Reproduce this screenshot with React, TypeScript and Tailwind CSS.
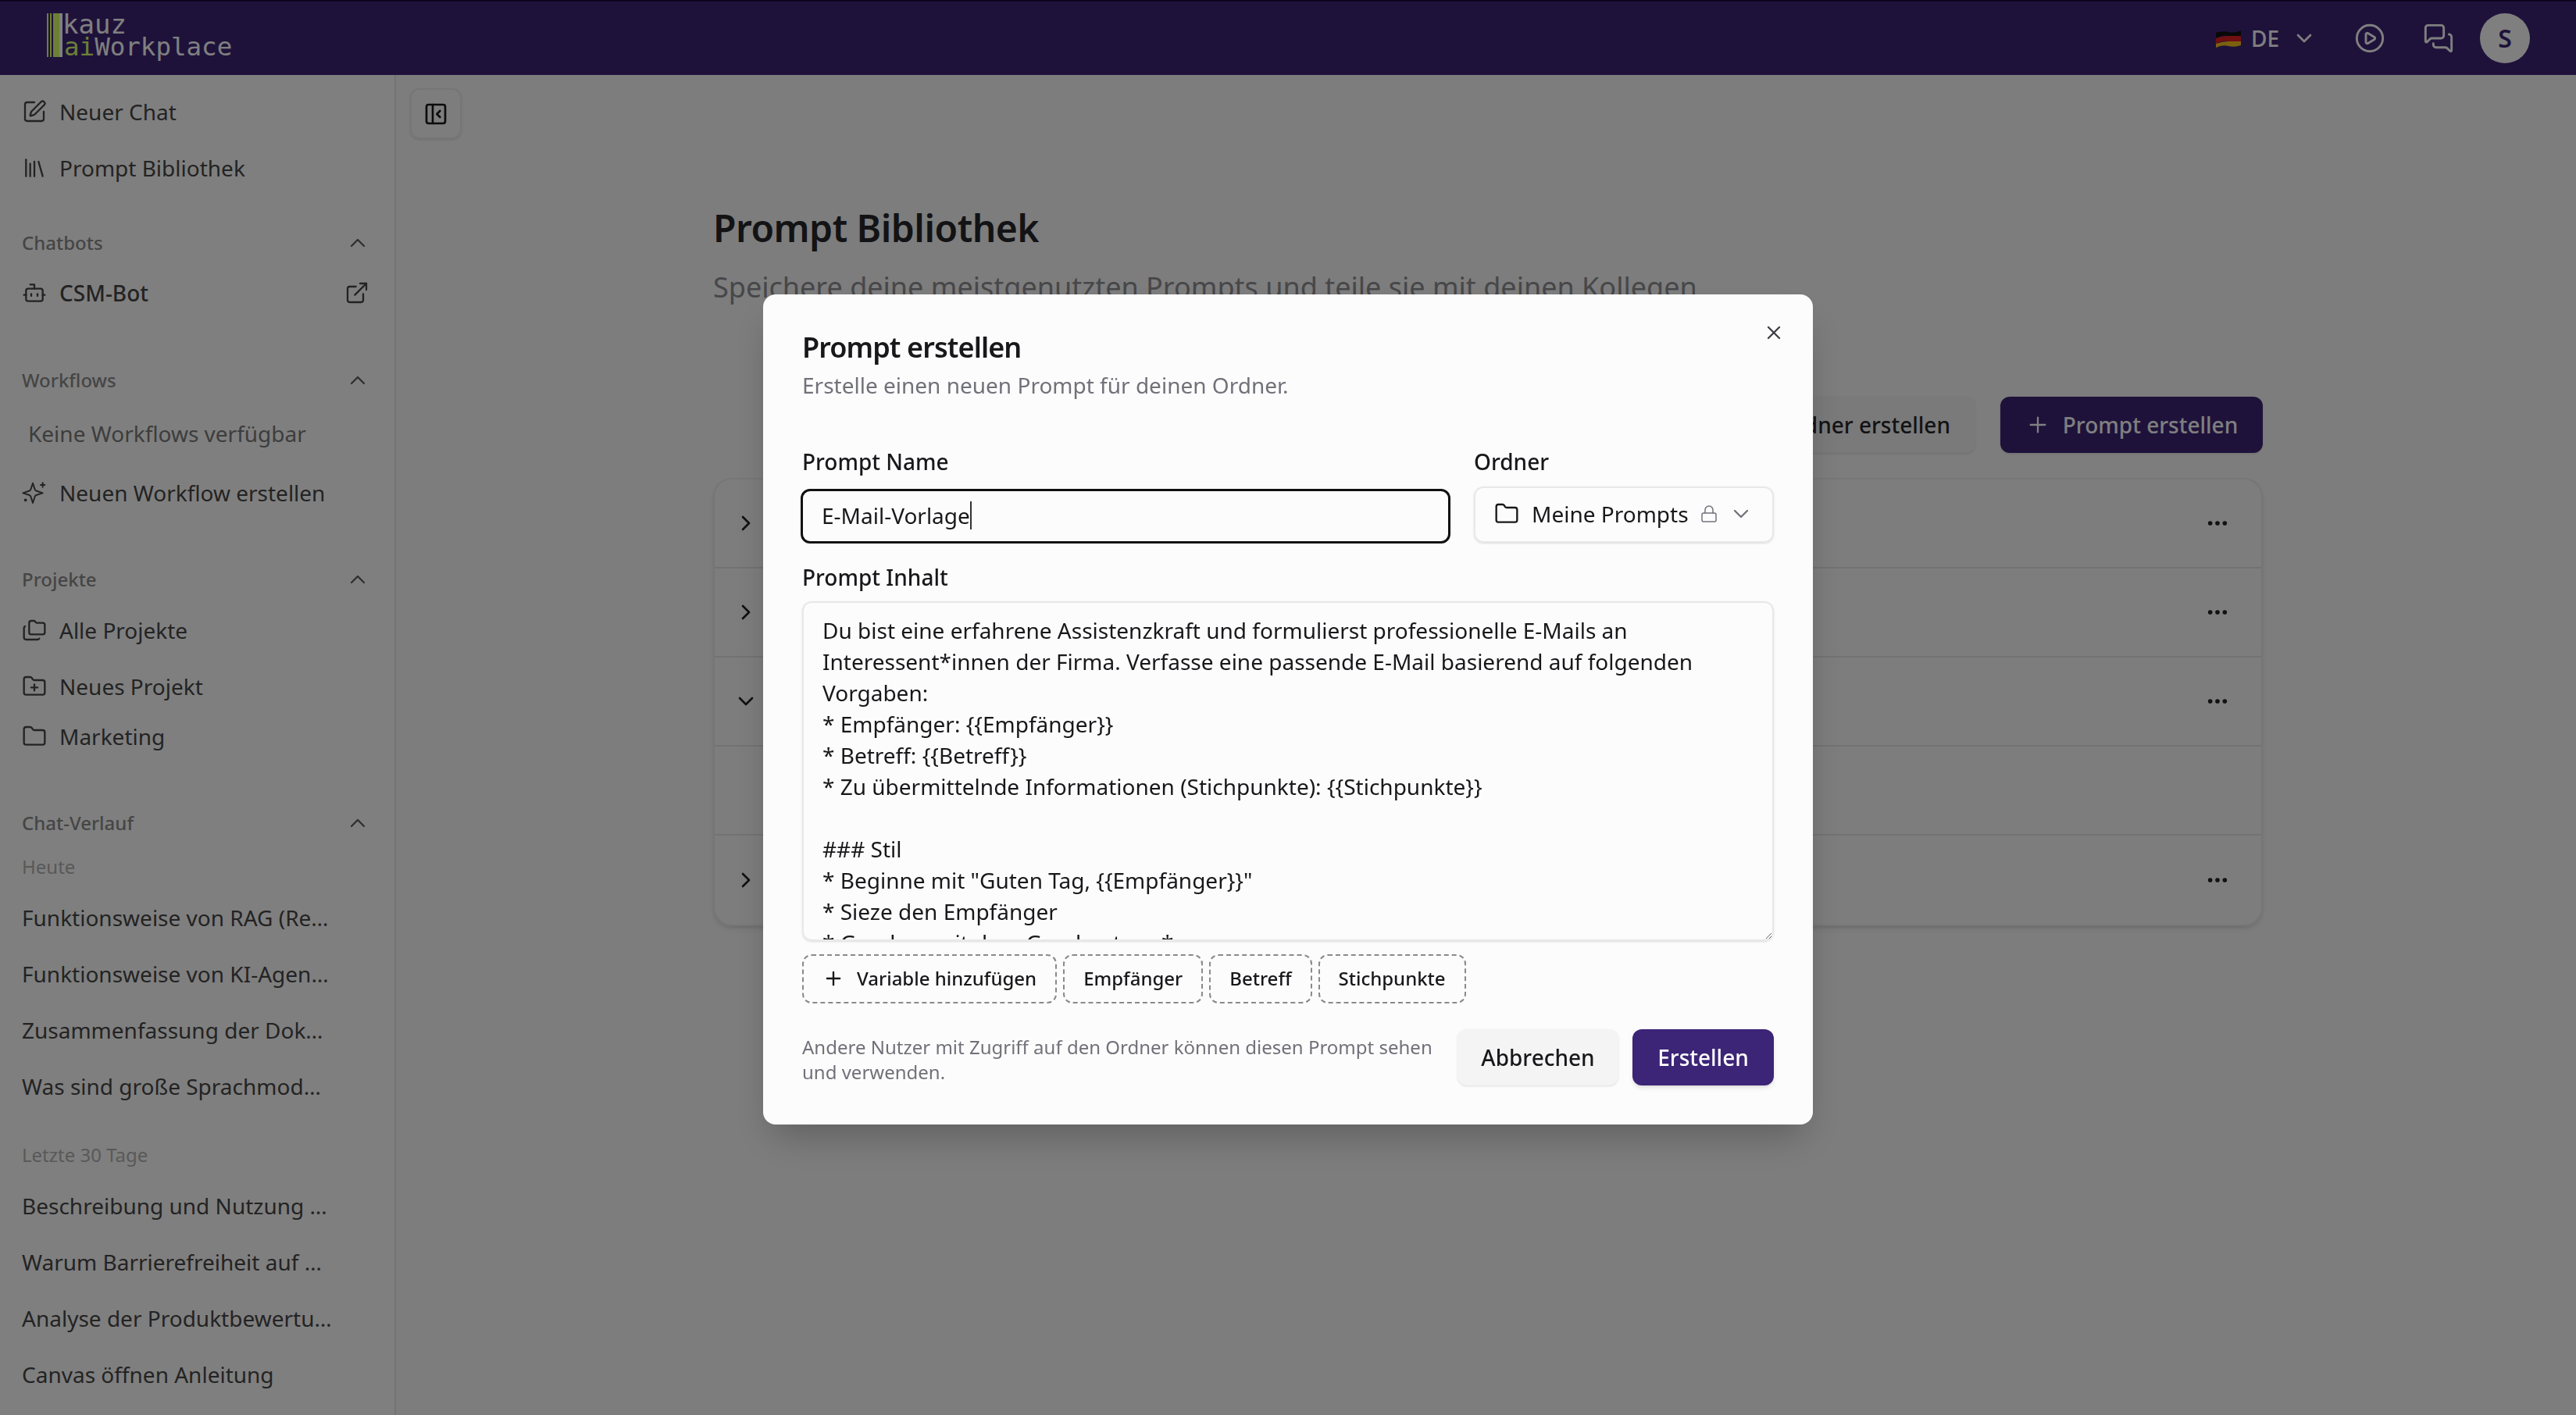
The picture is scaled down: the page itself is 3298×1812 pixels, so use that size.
import {
  Bot,
  ChevronDown,
  ChevronRight,
  ChevronUp,
  CirclePlay,
  Ellipsis,
  ExternalLink,
  Folder,
  FolderPlus,
  Folders,
  Library,
  Lock,
  MessagesSquare,
  PanelLeftClose,
  Plus,
  SquarePen,
  X,
} from 'lucide-react'
import type { ReactNode } from 'react'

const promptText = `Du bist eine erfahrene Assistenzkraft und formulierst professionelle E-Mails an Interessent*innen der Firma. Verfasse eine passende E-Mail basierend auf folgenden Vorgaben:
* Empfänger: {{Empfänger}}
* Betreff: {{Betreff}}
* Zu übermittelnde Informationen (Stichpunkte): {{Stichpunkte}}

### Stil
* Beginne mit "Guten Tag, {{Empfänger}}"
* Sieze den Empfänger
* Gendere mit dem Genderstern *
* Halte die E-Mail kurz und freundlich`

const todayChats = [
  'Funktionsweise von RAG (Retrieval Augmented Generation)',
  'Funktionsweise von KI-Agenten im Unternehmen',
  'Zusammenfassung der Dokumente aus dem Ordner',
  'Was sind große Sprachmodelle und wie funktionieren sie',
]

const olderChats = [
  'Beschreibung und Nutzung von Vorlagen im Workplace',
  'Warum Barrierefreiheit auf Webseiten wichtig ist',
  'Analyse der Produktbewertungen aus dem letzten Quartal',
  'Canvas öffnen Anleitung',
]

const Logo = () => (
  <div className="-mt-[7px] flex h-[58px] items-start">
    <div className="flex h-14 w-[20px] shrink-0">
      <div className="w-[2px] bg-[#d8ff6c]" />
      <div className="ml-[2px] w-[2px] bg-[#d8ff6c]" />
      <div className="ml-[2px] w-[8px] bg-[#d8ff6c]" />
      <div className="w-[4px] bg-white" />
    </div>
    <div className="font-['DejaVu_Sans_Mono',monospace] text-[32.5px] leading-[29px] text-white">
      <div className="text-[34px]">kauz</div>
      <div className="ml-[2px]">
        <span className="text-[#d8ff6c]">ai</span>Workplace
      </div>
    </div>
  </div>
)

const GermanFlag = () => (
  <svg width="34" height="24" viewBox="0 0 34 24" aria-hidden="true">
    <path d="M1 5 Q 9 2 17 4 T 33 2 V 9 Q 25 11 17 9 T 1 12 Z" fill="#111" />
    <path d="M1 12 Q 9 9 17 9 T 33 9 V 16 Q 25 18 17 16 T 1 19 Z" fill="#e02020" />
    <path d="M1 19 Q 9 16 17 16 T 33 16 V 21 Q 25 24 17 22 T 1 24 Z" fill="#f6c21c" />
  </svg>
)

// four point star with a plus and a dot, wider than lucide's current Sparkles
const WorkflowIcon = () => (
  <svg width="32" height="32" viewBox="0 0 24 24" fill="none" stroke="currentColor" strokeWidth="1.5" strokeLinecap="round" strokeLinejoin="round" className="shrink-0" aria-hidden="true">
    <path d="m10.5 2.8-2 6a2 2 0 0 1-1.3 1.3L1 12.3l6.2 2a2 2 0 0 1 1.3 1.3l2 6.2 2-6.2a2 2 0 0 1 1.3-1.3l6.2-2-6.2-2.2a2 2 0 0 1-1.3-1.3Z" />
    <path d="M20 2.5v4" />
    <path d="M22 4.5h-4" />
    <circle cx="3.5" cy="19" r="0.7" fill="currentColor" />
  </svg>
)

const Header = () => (
  <header className="flex h-24 shrink-0 items-center justify-between border-t-2 border-[#190a3d] bg-[#3c2477] pl-[60px] pr-[59px] text-white">
    <Logo />
    <div className="flex items-center">
      <GermanFlag />
      <span className="ml-3 text-[28px] font-medium">DE</span>
      <ChevronDown size={32} strokeWidth={2} className="ml-4" />
      <CirclePlay size={40} strokeWidth={1.75} className="ml-[48px]" />
      <MessagesSquare size={40} strokeWidth={1.75} className="ml-[48px]" />
      <div className="ml-[33px] flex h-16 w-16 items-center justify-center rounded-full bg-white text-[32px] font-semibold text-[#3c2477]">
        S
      </div>
    </div>
  </header>
)

const SideRow = ({ icon, children, className = 'h-[72px]' }: { icon?: ReactNode; children: ReactNode; className?: string }) => (
  <div className={`flex items-center gap-4 pl-7 pr-7 text-[28px] text-[#474747] ${className}`}>
    {icon}
    <span className="truncate">{children}</span>
  </div>
)

const SectionHeading = ({ title, className = '' }: { title: string; className?: string }) => (
  <div className={`flex h-14 items-center justify-between pl-7 pr-[31px] text-[24px] font-medium text-[#8b8b8b] ${className}`}>
    <span>{title}</span>
    <ChevronUp size={32} strokeWidth={1.75} className="text-[#5e5e5e]" />
  </div>
)

const DayLabel = ({ children, className = '' }: { children: ReactNode; className?: string }) => (
  <div className={`flex h-14 items-center pl-7 text-[24px] text-[#b2b2b2] ${className}`}>{children}</div>
)

const ChatRow = ({ title }: { title: string }) => (
  <div className="flex h-[72px] items-center pl-7 pr-[80px] text-[28px] text-[#474747]">
    <span className="truncate">{title}</span>
  </div>
)

const Sidebar = () => (
  <aside className="w-[507px] shrink-0 overflow-hidden border-r-2 border-[#e6e6e6] bg-white pt-[11px]">
    <SideRow icon={<SquarePen size={32} strokeWidth={1.75} />}>Neuer Chat</SideRow>
    <SideRow icon={<Library size={32} strokeWidth={1.75} />}>Prompt Bibliothek</SideRow>

    <SectionHeading title="Chatbots" className="mt-8" />
    <div className="flex h-[72px] items-center justify-between pl-7 pr-[32px] text-[28px] font-medium text-[#474747]">
      <span className="flex items-center gap-4">
        <Bot size={32} strokeWidth={1.75} />
        CSM-Bot
      </span>
      <ExternalLink size={32} strokeWidth={1.75} />
    </div>

    <SectionHeading title="Workflows" className="mt-12" />
    <div className="flex h-20 items-center pl-9 text-[28px] text-[#7a7a7a]">Keine Workflows verfügbar</div>
    <SideRow icon={<WorkflowIcon />}>Neuen Workflow erstellen</SideRow>

    <SectionHeading title="Projekte" className="mt-[47px]" />
    <SideRow icon={<Folders size={32} strokeWidth={1.75} />} className="mt-px h-[72px]">Alle Projekte</SideRow>
    <SideRow icon={<FolderPlus size={32} strokeWidth={1.75} />}>Neues Projekt</SideRow>
    <SideRow icon={<Folder size={32} strokeWidth={1.75} />} className="h-14">Marketing</SideRow>

    <SectionHeading title="Chat-Verlauf" className="mt-[55px]" />
    <DayLabel>Heute</DayLabel>
    <div className="mt-px">
      {todayChats.map((title) => (
        <ChatRow key={title} title={title} />
      ))}
    </div>
    <DayLabel className="mt-6">Letzte 30 Tage</DayLabel>
    <div className="mt-px">
      {olderChats.map((title) => (
        <ChatRow key={title} title={title} />
      ))}
    </div>
  </aside>
)

const FolderRow = ({ open = false, dots = true }: { open?: boolean; dots?: boolean }) => (
  <div className="flex h-[114px] items-center justify-between border-b-2 border-[#e4e4e7] pl-[24px] pr-[40px] last:border-b-0">
    {dots || open ? (
      open ? <ChevronDown size={32} strokeWidth={2} className="text-[#222]" /> : <ChevronRight size={32} strokeWidth={2} className="text-[#222]" />
    ) : (
      <span />
    )}
    {dots && <Ellipsis size={32} strokeWidth={2.25} className="text-[#222]" />}
  </div>
)

const Main = () => (
  <main className="min-w-0 flex-1 bg-[#fafafa]">
    <div className="ml-[18px] mt-[17px] flex h-[65px] w-[66px] items-center justify-center rounded-xl border-2 border-[#ececec] text-[#18181b] shadow-sm">
      <PanelLeftClose size={32} strokeWidth={2} />
    </div>
    <div className="ml-[406px] mr-[401px]">
      <h1 className="mt-[82px] text-[48px] font-semibold leading-[64px] tracking-[-0.5px] text-[#27272a]">Prompt Bibliothek</h1>
      <p className="mt-4 text-[36px] leading-[56px] text-[#8e8e93]">
        Speichere deine meistgenutzten Prompts und teile sie mit deinen Kollegen
      </p>
      <div className="mt-[112px] flex justify-end gap-8">
        <div className="flex h-[72px] items-center rounded-xl bg-[#f4f4f5] px-8 text-[28px] font-medium text-[#27272a] shadow-sm">
          Ordner erstellen
        </div>
        <div className="flex h-[72px] w-[336px] items-center justify-center gap-4 rounded-xl bg-[#3c2477] text-[28px] font-medium text-white shadow-sm">
          <Plus size={32} strokeWidth={1.75} />
          Prompt erstellen
        </div>
      </div>
      <div className="mt-8 rounded-3xl border-2 border-[#ececec] shadow-md">
        <FolderRow />
        <FolderRow />
        <FolderRow open />
        <FolderRow dots={false} />
        <FolderRow />
      </div>
    </div>
  </main>
)

const VariableChip = ({ children }: { children: ReactNode }) => (
  <div className="flex h-[63px] items-center gap-4 rounded-xl border-2 border-dashed border-[#8a8a8a] px-6 text-[24px] font-medium text-[#18181b]">
    {children}
  </div>
)

const PromptModal = () => (
  <div className="fixed inset-0 flex items-center justify-center bg-black/50 pt-1">
    <div className="relative w-[1344px] rounded-[16px] bg-[#fcfcfc] px-[50px] pb-[50px] pt-12 shadow-2xl">
      <X size={28} strokeWidth={2} className="absolute right-[36px] top-[35px] text-[#3f3f46]" />
      <h2 className="text-[36px] font-semibold leading-10 tracking-[-0.9px] text-[#18181b]">Prompt erstellen</h2>
      <p className="mt-2 text-[28px] leading-10 text-[#71717a]">Erstelle einen neuen Prompt für deinen Ordner.</p>

      <div className="mt-[58px] flex gap-[30px]">
        <div className="min-w-0 flex-1">
          <label className="block text-[28px] font-medium leading-10 text-[#18181b]">Prompt Name</label>
          <div className="-ml-[2px] mt-[15px] flex h-[70px] items-center rounded-xl border-[3px] border-[#111] pb-[2px] pl-6 pr-6 text-[28px] text-[#18181b]">
            E-Mail-Vorlage
            <span className="h-9 w-[2px] bg-[#333]" />
          </div>
        </div>
        <div className="w-[384px] shrink-0">
          <label className="block text-[28px] font-medium leading-10 text-[#18181b]">Ordner</label>
          <div className="mt-3 flex h-[72px] items-center rounded-xl border-2 border-[#e8e8e8] pb-[2px] pl-[24px] pr-[24px] text-[28px] text-[#18181b] shadow-sm">
            <Folder size={32} strokeWidth={1.75} />
            <span className="ml-[16px]">Meine Prompts</span>
            <Lock size={24} strokeWidth={1.5} className="ml-[14px] text-[#71717a]" />
            <ChevronDown size={32} strokeWidth={1.75} className="ml-auto text-[#71717a]" />
          </div>
        </div>
      </div>

      <label className="mt-[23px] block text-[28px] font-medium leading-10 text-[#18181b]">Prompt Inhalt</label>
      <textarea
        readOnly
        value={promptText}
        className="mt-[11px] block h-[435px] w-full resize-y overflow-hidden rounded-xl border-2 border-[#e8e8e8] bg-transparent px-6 py-[15px] text-[28px] leading-10 text-[#18181b] shadow-sm outline-none"
      />

      <div className="mt-[17px] flex gap-2">
        <VariableChip>
          <Plus size={28} strokeWidth={2} />
          Variable hinzufügen
        </VariableChip>
        <VariableChip>Empfänger</VariableChip>
        <VariableChip>Betreff</VariableChip>
        <VariableChip>Stichpunkte</VariableChip>
      </div>

      <div className="mt-[33px] flex items-center justify-between">
        <p className="mt-[6px] w-[820px] text-[24px] leading-8 text-[#71717a]">
          Andere Nutzer mit Zugriff auf den Ordner können diesen Prompt sehen und verwenden.
        </p>
        <div className="flex gap-[18px]">
          <div className="flex h-[72px] w-[206px] items-center justify-center rounded-xl bg-[#f4f4f5] text-[28px] font-medium text-[#18181b] shadow-sm">
            Abbrechen
          </div>
          <div className="flex h-[72px] w-[181px] items-center justify-center rounded-xl bg-[#3c2477] text-[28px] font-medium text-white shadow-md">
            Erstellen
          </div>
        </div>
      </div>
    </div>
  </div>
)

const App = () => (
  <div className="flex h-screen flex-col overflow-hidden bg-[#fafafa] font-['Noto_Sans',sans-serif]">
    <Header />
    <div className="flex min-h-0 flex-1">
      <Sidebar />
      <Main />
    </div>
    <PromptModal />
  </div>
)

export default App
